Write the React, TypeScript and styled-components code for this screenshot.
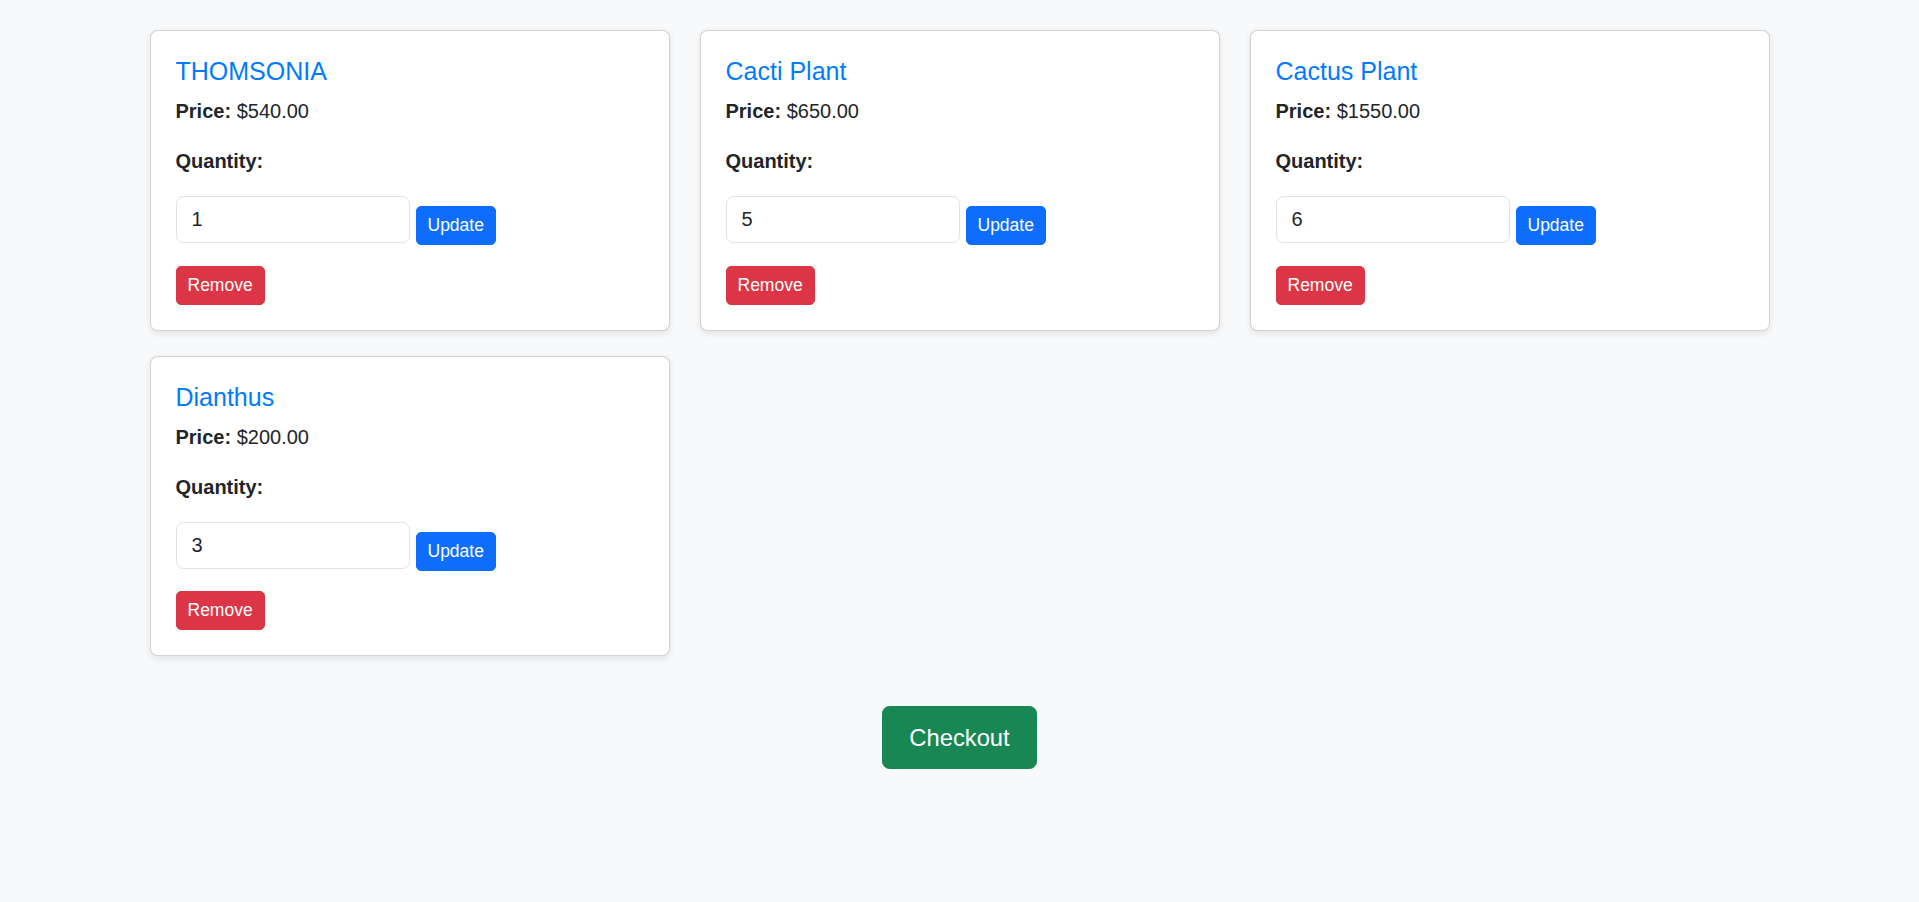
import * as React from 'react';
import styled, { createGlobalStyle } from 'styled-components';

const GlobalStyle = createGlobalStyle`
  html, body {
    margin: 0;
    padding: 0;
    background: #f8f9fa;
  }
  body {
    font-family: "Liberation Sans", Arial, sans-serif;
    color: #212529;
    font-size: 20px;
    line-height: 1.5;
  }
  * {
    box-sizing: border-box;
  }
`;

const Page = styled.div`
  min-height: 902px;
  padding-top: 30px;
`;

const Grid = styled.div`
  width: 1620px;
  margin: 0 auto;
  display: grid;
  grid-template-columns: repeat(3, 1fr);
  column-gap: 30px;
  row-gap: 25px;
`;

const Card = styled.div`
  background: #fff;
  border: 1.25px solid rgba(0, 0, 0, 0.175);
  border-radius: 7.5px;
  box-shadow: 0 2.5px 7px rgba(0, 0, 0, 0.09);
  padding: 25px;
`;

const Title = styled.h5`
  margin: 0 0 10px;
  font-size: 25px;
  font-weight: 400;
  line-height: 1.2;
  color: #007bff;
`;

const Line = styled.p`
  margin: 0 0 20px;
`;

const Label = styled.label`
  display: block;
  font-weight: 700;
  margin-bottom: 20px;
`;

const Row = styled.div`
  display: flex;
  align-items: flex-start;
  gap: 6px;
  margin-bottom: 20.5px;
`;

const QtyInput = styled.input`
  width: 234px;
  height: 47px;
  padding: 0 15px;
  font-family: inherit;
  font-size: 20px;
  color: #212529;
  background: #fff;
  border: 1.25px solid #dee2e6;
  border-radius: 7.5px;
  outline: none;
`;

const Btn = styled.button<{ $tone: string; $top?: number }>`
  display: block;
  height: 39px;
  margin-top: ${(p) => p.$top ?? 0}px;
  padding: 0 11px;
  font-family: inherit;
  font-size: 17.5px;
  color: #fff;
  background: ${(p) => p.$tone};
  border: 1.25px solid ${(p) => p.$tone};
  border-radius: 5px;
  cursor: pointer;
`;

const Footer = styled.div`
  display: flex;
  justify-content: center;
  margin-top: 50px;
`;

const CheckoutBtn = styled.button`
  height: 63px;
  padding: 0 26px;
  font-family: inherit;
  font-size: 23.75px;
  color: #fff;
  background: #198754;
  border: 1.25px solid #198754;
  border-radius: 7.5px;
  cursor: pointer;
`;

type Item = { name: string; price: number; qty: number };

const items: Item[] = [
  { name: 'THOMSONIA', price: 540, qty: 1 },
  { name: 'Cacti Plant', price: 650, qty: 5 },
  { name: 'Cactus Plant', price: 1550, qty: 6 },
  { name: 'Dianthus', price: 200, qty: 3 },
];

function CartCard({ item }: { item: Item }) {
  return (
    <Card>
      <Title>{item.name}</Title>
      <Line>
        <strong>Price:</strong> ${item.price.toFixed(2)}
      </Line>
      <Label>Quantity:</Label>
      <Row>
        <QtyInput type="number" defaultValue={item.qty} min={1} />
        <Btn $tone="#0d6efd" $top={10}>Update</Btn>
      </Row>
      <Btn $tone="#dc3545">Remove</Btn>
    </Card>
  );
}

export default function App() {
  return (
    <Page>
      <GlobalStyle />
      <Grid>
        {items.map((it) => (
          <CartCard key={it.name} item={it} />
        ))}
      </Grid>
      <Footer>
        <CheckoutBtn>Checkout</CheckoutBtn>
      </Footer>
    </Page>
  );
}
